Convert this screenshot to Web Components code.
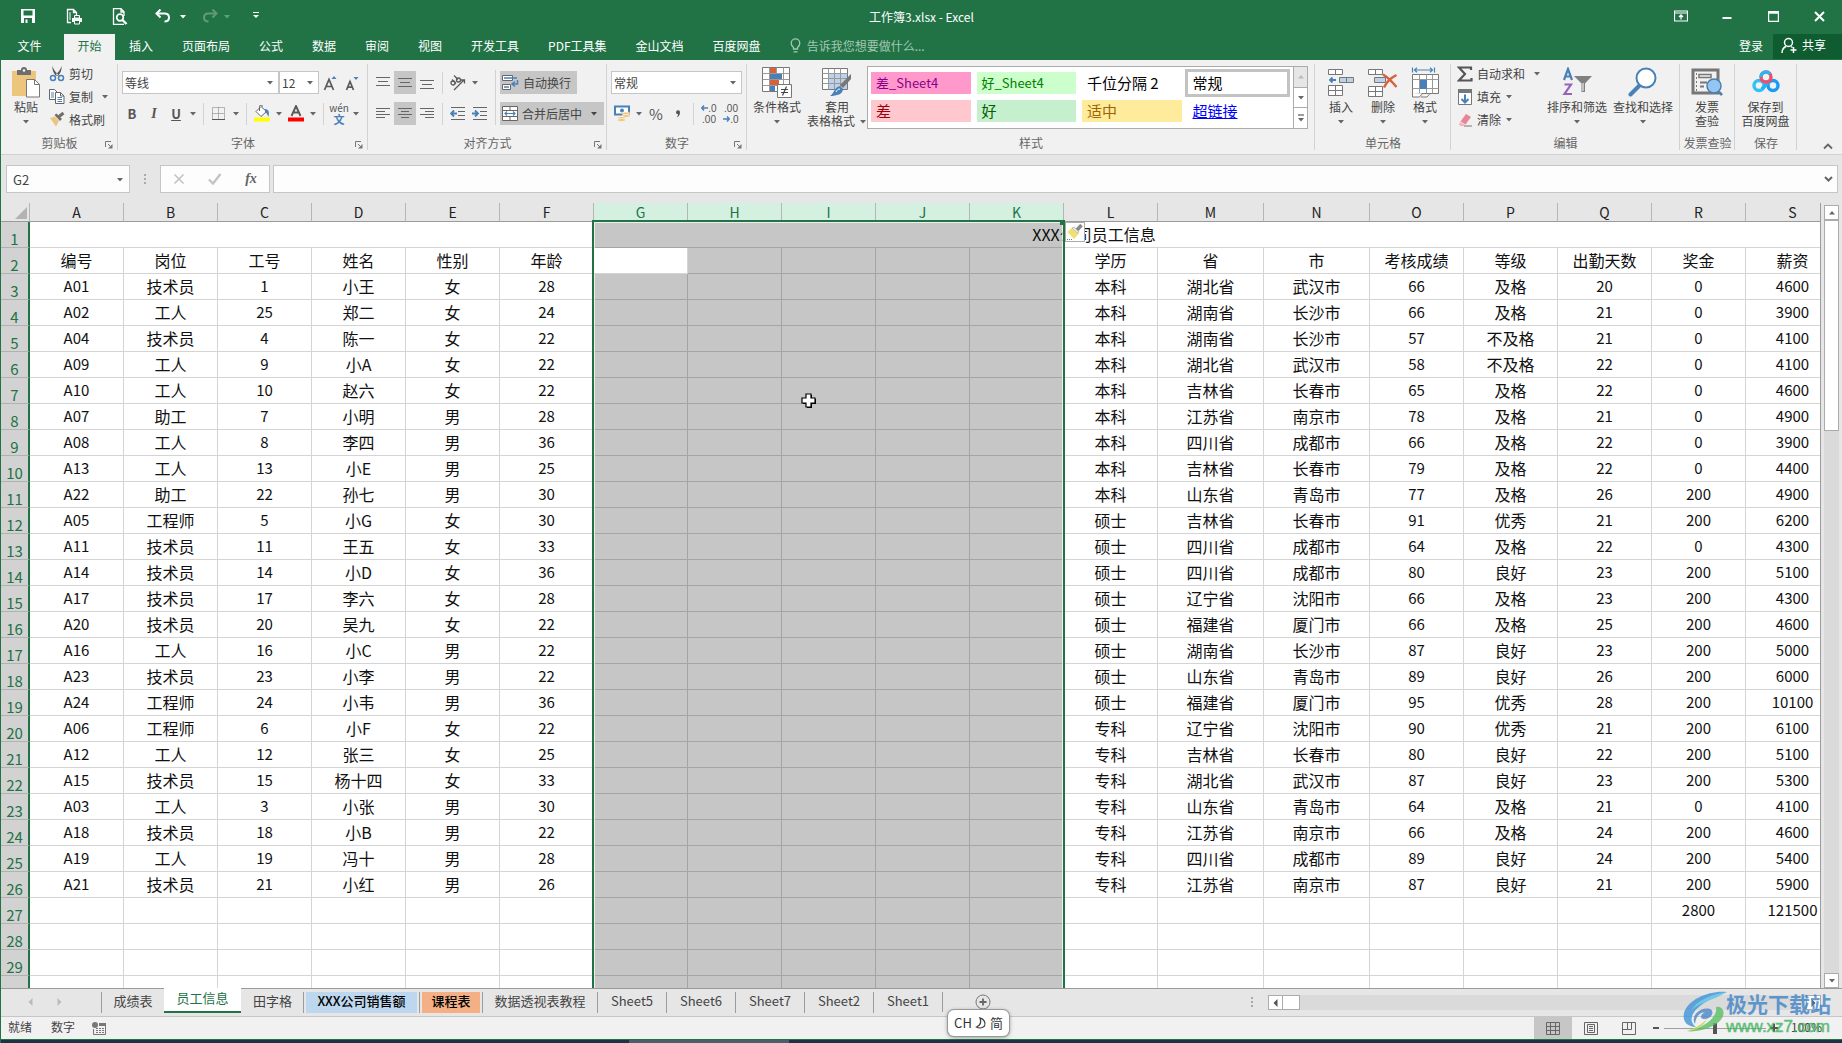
<!DOCTYPE html>
<html lang="zh-CN">
<head>
<meta charset="utf-8">
<title>工作簿3.xlsx - Excel</title>
<style>
html,body{margin:0;height:100%}
body{font:12px/16px "Noto Sans CJK SC",sans-serif;color:#444;background:#e6e6e6;overflow:hidden}
</style>
</head>
<body>
<xl-app></xl-app>
<script>
const BASE = `*{box-sizing:border-box}
button,input,select{font:inherit;color:inherit;margin:0;padding:0;border:0;background:none;border-radius:0;outline:0}
button{display:flex;align-items:center;justify-content:center;flex:none}`;

class XlElement extends HTMLElement {
  connectedCallback() {
    if (this.shadowRoot) return;
    const t = document.createElement('template');
    t.innerHTML = `<style>${BASE}</style>` + this.view();
    this.attachShadow({mode: 'open'}).append(t.content.cloneNode(true));
  }
}
const define = (name, view) => customElements.define(name, class extends XlElement {
  view() { return view(this); }
});

/* name: [width, height, drawing] */
const B = '#4a80b8';
const lines = (list, c = '#666') => `<path d="${list.map(([x, y, w]) => `M${x} ${y}.5h${w}`).join('')}" stroke="${c}" fill="none"/>`;
const ICONS = {
  caret: [8, 5, `<path d="M1 1h6l-3 3.500z" fill="currentColor"/>`],
  save: [16, 16, `<path d="M1 1h14v14H1z" fill="#fff"/><path d="M3.500 2.500h9v5h-9z" fill="#217346"/><path d="M4 10h8v5H4z" fill="#217346"/><path d="M5.500 11.500h2V15h-2z" fill="#fff"/>`],
  print: [17, 17, `<path d="M5 14.500H1.500v-13h6l3 3V7M7.500 1.500v3h3" fill="none" stroke="#fff" stroke-width="1.300"/><path d="M4 4v8" stroke="#fff"/><path d="M6 10h10v4H6z" fill="#fff"/><path d="M8.500 7.500h5V10h-5zM8.500 12.500h5v3.500h-5z" fill="#217346" stroke="#fff"/>`],
  preview: [16, 17, `<path d="M12 16.300H1.500V.7H9l3 3V8M9 .7V4h3" fill="none" stroke="#fff" stroke-width="1.300"/><circle cx="8" cy="9.500" r="3.300" fill="none" stroke="#fff" stroke-width="1.700"/><path d="M10.500 12l4 4" stroke="#fff" stroke-width="2.400"/>`],
  undo: [16, 14, `<path d="M2 4.500h7.500c3 0 4.500 1.800 4.500 4s-1.500 4-4.500 4" fill="none" stroke="#fff" stroke-width="2"/><path d="M5.500.5l-4 4 4 4" fill="none" stroke="#fff" stroke-width="2"/>`],
  redo: [16, 14, `<g opacity=".28"><path d="M14 4.500H6.500c-3 0-4.500 1.800-4.500 4s1.500 4 4.500 4" fill="none" stroke="#fff" stroke-width="2"/><path d="M10.500.5l4 4-4 4" fill="none" stroke="#fff" stroke-width="2"/></g>`],
  custom: [8, 8, `<path d="M1 .5h6" stroke="#fff"/><path d="M1 3h6L4 6z" fill="#fff"/>`],
  ribbonOpt: [14, 12, `<path d="M.5 1h13v10H.5zM.5 3h13" fill="none" stroke="#fff" stroke-width="1.200"/><path d="M7 9.500V5.500M5 7l2-2 2 2" fill="none" stroke="#fff" stroke-width="1.300"/>`],
  min: [10, 10, `<path d="M.5 7h9" stroke="#fff" stroke-width="2"/>`],
  max: [11, 11, `<path d="M.6.6h9.800v9.800H.6z" fill="none" stroke="#fff" stroke-width="1.200"/><path d="M0 1.500h11" stroke="#fff" stroke-width="2.500"/>`],
  close: [11, 11, `<path d="M1 1l9 9M10 1l-9 9" stroke="#fff" stroke-width="2"/>`],
  bulb: [11, 15, `<path d="M3.500 11V9.500C2 8.300 1.200 7 1.200 5.200a4.300 4.300 0 0 1 8.600 0C9.800 7 9 8.300 7.500 9.500V11zM3.500 13.800h4" fill="none" stroke="#a3c7b2" stroke-width="1.300"/>`],
  person: [17, 17, `<circle cx="7.500" cy="5.500" r="4" fill="none" stroke="#fff" stroke-width="1.500"/><path d="M1 16c0-3.500 1.500-5.500 4-6.500M10 9.500l1.500 1M12.500 10v6M9.500 13h6" fill="none" stroke="#fff" stroke-width="1.500"/>`],
  paste: [30, 31, `<path d="M1 4h24v25H1z" fill="#edc67d"/><path d="M6 3h4a3 3 0 0 1 6 0h4v5H6z" fill="#6e6e6e"/><circle cx="13" cy="3.500" r="1.200" fill="#fff"/><path d="M15.500 12.500h8l5 5v12.500h-13z" fill="#fff" stroke="#777"/><path d="M23.500 12.500v5h5" fill="none" stroke="#777"/>`],
  cut: [16, 16, `<path d="M3.500 0c1 3.500 3 6 5.500 8.500L7 10C4.500 7 3 4 3.500 0zM12.500 0c-1 3.500-3 6-5.500 8.500L9 10c2.500-3 4-6 3.500-10z" fill="#5a5a5a"/><circle cx="4" cy="12" r="2.500" fill="none" stroke="${B}" stroke-width="1.500"/><circle cx="12" cy="12" r="2.500" fill="none" stroke="${B}" stroke-width="1.500"/>`],
  copy: [16, 15, `<path d="M.5.5h5l3 3v7h-8z" fill="#fff" stroke="#666"/><path d="M2 4h3M2 6h3M2 8h3" stroke="${B}"/><path d="M6.500 3.500h5l3.500 3.500v7.500H6.500z" fill="#fff" stroke="#666"/><path d="M11.500 3.500V7H15" fill="none" stroke="#666"/><path d="M8.500 8.500h4.500M8.500 10.500h4.500M8.500 12.500h4.500" stroke="${B}"/>`],
  painter: [16, 15, `<path d="M1 6l5-1.500 4 4.500L7 14.500z" fill="#edc67d"/><path d="M5.500 3l2-1.500 5.500 5.500-2 2z" fill="#6e6e6e"/><path d="M10 4.500L14.500 1" stroke="#6e6e6e" stroke-width="3"/>`],
  fontUp: [15, 16, `<path d="M1.500 15L6 4.500 10.500 15M3 11.500h6" fill="none" stroke="#5a5a5a" stroke-width="1.700"/><path d="M8.500 4L11 1l2.500 3z" fill="${B}"/>`],
  fontDown: [15, 16, `<path d="M1.500 15L5 6.500 8.500 15M2.800 12.200h4.500" fill="none" stroke="#5a5a5a" stroke-width="1.700"/><path d="M8.500 2h5L11 5z" fill="${B}"/>`],
  border: [14, 14, `<path d="M.5.500h12v12H.5zM6.500.500v12M.5 6.500h12" fill="none" stroke="#777" stroke-dasharray="1 1"/><path d="M0 12.500h13" stroke="#555"/>`],
  fill: [18, 17, `<path d="M3 6.500L8 1.500l5.500 5L8 11.500z" fill="#fff" stroke="#666"/><path d="M6.500 6V1.500a1.500 1.500 0 0 1 3 0" fill="none" stroke="#666"/><path d="M12 4c4 .5 4.500 3 3.500 8-1-2-1.500-4-3.500-5z" fill="${B}"/><path d="M1 12.500h16v4H1z" fill="#ff0"/>`],
  fontColor: [18, 17, `<path d="M4.500 11L9 1l4.500 10M6 7.500h6" fill="none" stroke="#5a5a5a" stroke-width="1.900"/><path d="M1 12.500h16v4H1z" fill="#f00"/>`],
  top: [16, 12, lines([[1, 0, 14], [3, 4, 10], [1, 8, 14]])],
  mid: [16, 12, lines([[1, 1, 14], [3, 5, 10], [1, 9, 14]])],
  bot: [16, 12, lines([[1, 3, 14], [3, 7, 10], [1, 11, 14]])],
  left: [16, 12, lines([[1, 0, 14], [1, 3, 9], [1, 6, 14], [1, 9, 9]])],
  center: [16, 12, lines([[1, 0, 14], [4, 3, 8], [1, 6, 14], [4, 9, 8]])],
  right: [16, 12, lines([[1, 0, 14], [6, 3, 9], [1, 6, 14], [6, 9, 9]])],
  orient: [18, 16, `<g fill="none" stroke="#5a5a5a" stroke-width="1.300"><circle cx="4" cy="8" r="2"/><path d="M3 4.500l4 4"/><circle cx="9.500" cy="5" r="2"/><path d="M5 .5l4 4"/><path d="M5 15L15 5M12 5h3.500v3.500"/></g>`],
  outdent: [16, 13, lines([[1, 0, 14], [8, 4, 7], [8, 8, 7], [1, 12, 14]]) + `<path d="M1 6.500h6M4 3.500l-3 3 3 3" fill="none" stroke="${B}" stroke-width="1.800"/>`],
  indent: [16, 13, lines([[1, 0, 14], [8, 4, 7], [8, 8, 7], [1, 12, 14]]) + `<path d="M0 6.500h6M3 3.500l3 3-3 3" fill="none" stroke="${B}" stroke-width="1.800"/>`],
  wrap: [17, 16, `<path d="M.5.500h10v5H.5zM.5 9.500h8v5h-8z" fill="#fff" stroke="#666"/><path d="M2 3h13M2 12h5" stroke="${B}" stroke-width="1.300"/><path d="M15.500 5v4h-5M13 6.500L10 9l3 2.500" fill="none" stroke="${B}" stroke-width="1.500"/>`],
  merge: [16, 15, `<path d="M.5.500h15v14H.5zM.5 4.500h15M.5 10.500h15M8 .5v4M8 10.500v4" fill="#fff" stroke="#666"/><path d="M2.500 7.500h11M5 5.500l-2 2 2 2M11 5.500l2 2-2 2" fill="none" stroke="${B}" stroke-width="1.200"/>`],
  money: [17, 17, `<path d="M1 1.500h14v8H1z" fill="#fff" stroke="${B}" stroke-width="2"/><circle cx="8" cy="5.500" r="2" fill="${B}"/><g fill="#edc67d" stroke="#fff" stroke-width=".6"><ellipse cx="12" cy="8.500" rx="4" ry="1.500"/><ellipse cx="12" cy="11" rx="4" ry="1.500"/><ellipse cx="7.500" cy="13" rx="4" ry="1.500"/><ellipse cx="7.500" cy="15" rx="4" ry="1.500"/></g>`],
  comma: [6, 8, `<path d="M1 2.200a2 2 0 1 1 4 .3C5 5 3.500 7 1.500 7.500 2.500 6.500 3 5.500 3 4.300A2 2 0 0 1 1 2.200z" fill="#555"/>`],
  arrL: [7, 6, `<path d="M.5 3H7M3 .5L.7 3 3 5.500" fill="none" stroke="${B}" stroke-width="1.500"/>`],
  arrR: [7, 6, `<path d="M0 3h6.500M4 .5L6.300 3 4 5.500" fill="none" stroke="${B}" stroke-width="1.500"/>`],
  cond: [30, 31, `<path d="M.5.500h27v24H.5z" fill="#fff" stroke="#777"/><path d="M8 1h7v5H8zM8 13h9v5H8z" fill="#d9603b"/><path d="M8 7h12v5H8zM8 19h5v5H8z" fill="${B}"/><path d="M.5 6.500h27M.5 12.500h27M.5 18.500h27M7.500.500v24M14.500.500v6M21.500.500v24" fill="none" stroke="#999"/><path d="M15.500 17.500h14v13h-14z" fill="#fff" stroke="#777"/><path d="M19 22.500h7M19 25.500h7M24.500 19.500l-4 9" stroke="#444" stroke-width="1.200"/>`],
  tableFmt: [30, 31, `<path d="M.5 1.500h25v21H.5z" fill="#fff" stroke="#777"/><path d="M7 7h18v15H7z" fill="#bdd1e8"/><path d="M.5 6.500h25M.5 11.500h25M.5 16.500h25M6.500 1.500v21M12.500 1.500v21M18.500 1.500v21" stroke="#999" fill="none"/><path d="M29 7v5l-8 9-3-3z" fill="#777"/><path d="M18 19l3 3c0 5-6 7-13 7 4-2 4-9 10-10z" fill="${B}"/><path d="M14 25c1-2 2-3 4-3" stroke="#fff" fill="none"/>`],
  insert: [28, 31, `<path d="M1.500 2.500h14v5h-14zM8.500 2.500v5M1.500 18.500h14v10h-14zM8.500 18.500v10M1.500 23.500h14" fill="#fff" stroke="#777"/><path d="M12.500 10.500h14v5h-14zM19.500 10.500v5" fill="#bdd1e8" stroke="#777"/><path d="M3 13h6M5.500 10.500L3 13l2.500 2.500" fill="none" stroke="${B}" stroke-width="1.800"/>`],
  remove: [30, 31, `<path d="M.5 2.500h14v5H.5zM7.500 2.500v5M.5 19.500h14v10H.5zM7.500 19.500v10M.5 24.500h14" fill="#fff" stroke="#777"/><path d="M6.500 10.500h11v5h-11z" fill="#bdd1e8" stroke="#777"/><path d="M15 7.500c5 3 9 7 13.500 12.500M28.500 8c-6 3-10 7-12.500 12.500" fill="none" stroke="#d9603b" stroke-width="2.400"/>`],
  format: [29, 31, `<path d="M1.500.5v5M23.500.5v5M3 3h19M6 .8L3.500 3 6 5.200M19 .8L21.500 3 19 5.200" fill="none" stroke="${B}" stroke-width="1.200"/><path d="M1.500 7.500h26v19h-26z" fill="#fff" stroke="#777"/><path d="M1.500 12.500h26M1.500 21.500h26M8.500 7.500v19M15.500 7.500v19M21.500 7.500v19" stroke="#999" fill="none"/><path d="M9 13h7v9H9z" fill="${B}"/><path d="M1.500 26v4h7l3-3.500M10 30h6l3-3.500" stroke="#777" fill="#fff"/>`],
  sum: [16, 16, `<path d="M14 4V1.500H2L8 8l-6 6.500h12.500V12" fill="none" stroke="#555" stroke-width="2.200"/>`],
  down: [14, 16, `<path d="M.5.500h13v15H.5z" fill="#fff" stroke="#777"/><path d="M0 0h14v4H0z" fill="#777"/><path d="M7 5.500v8M3.500 10L7 13.500 10.500 10" fill="none" stroke="${B}" stroke-width="2"/>`],
  erase: [15, 14, `<path d="M8 1l5 3-5.500 7.500-5-3z" fill="#e88597"/><path d="M2 9l5 3-1 1H2.500L1 11.500z" fill="#f2b5bf"/><path d="M6 13h8" stroke="#777"/>`],
  sort: [30, 30, `<path d="M2 13L6 2l4 11M3.500 9.500h5.500" fill="none" stroke="${B}" stroke-width="2.200"/><path d="M2.500 17.500H9L2.500 27H10" fill="none" stroke="#9563b8" stroke-width="2.200"/><path d="M12 9h18l-7 7.500V25h-3.500v-8.500z" fill="#808080"/><path d="M21 16v8" stroke="#fff"/>`],
  find: [30, 30, `<path d="M2.500 27.500l9-9" stroke="${B}" stroke-width="4" stroke-linecap="round"/><circle cx="18" cy="11" r="9.500" fill="#fff" stroke="${B}" stroke-width="2"/>`],
  invoice: [32, 28, `<path d="M2 2h25v23H2z" fill="none" stroke="#777" stroke-width="3"/><path d="M8 6.500h12v3H8z" fill="none" stroke="#777" stroke-width="1.500"/><path d="M5.500 5v18" stroke="#777" stroke-dasharray="2 2"/><path d="M9 14.500h7M9 18.500h4" stroke="#777" stroke-width="2"/><circle cx="23" cy="18" r="7" fill="#94c6f5" stroke="#4a80a8" stroke-width="1.500"/><path d="M28 24l3 3" stroke="#4a80a8" stroke-width="2.500"/>`],
  baidu: [28, 28, `<circle cx="7" cy="17.500" r="5" fill="none" stroke="#2fc3f2" stroke-width="3.400"/><circle cx="21" cy="17.500" r="5" fill="none" stroke="#1b9bf5" stroke-width="3.400"/><path d="M10 21l7-7.500" stroke="#23b2f5" stroke-width="3.400"/><circle cx="14" cy="9" r="5" fill="none" stroke="#f04e6b" stroke-width="3.400"/><path d="M9 9a5 5 0 0 1 9-3" fill="none" stroke="#2bb5f0" stroke-width="3.400"/>`],
  launcher: [8, 8, `<path d="M.5 6V.5H6M3 3l3 3" fill="none" stroke="#777"/><path d="M7.500 3v4.500H3z" fill="#777"/>`],
  up: [8, 5, `<path d="M1 4.500h6L4 1z" fill="currentColor"/>`],
  lft: [5, 8, `<path d="M4.500 0v8L.5 4z" fill="currentColor"/>`],
  rgt: [5, 8, `<path d="M.5 0v8l4-4z" fill="currentColor"/>`],
  more: [8, 8, `<path d="M1 1h6" stroke="#666" stroke-width="1.300"/><path d="M1 4h6L4 7.500z" fill="#666"/>`],
  collapse: [10, 7, `<path d="M1 5.500l4-4 4 4" fill="none" stroke="#666" stroke-width="1.800"/>`],
  chev: [9, 6, `<path d="M1 1l3.500 3.500L8 1" fill="none" stroke="#666" stroke-width="2"/>`],
  x: [12, 12, `<path d="M1.500 1.500l9 9M10.500 1.500l-9 9" stroke="#c3c3c3" stroke-width="1.600"/>`],
  tick: [14, 12, `<path d="M1 6.500l4 4L12.500 1" fill="none" stroke="#c3c3c3" stroke-width="2.400"/>`],
  plus: [16, 16, `<circle cx="8" cy="8" r="7" fill="none" stroke="#777"/><path d="M8 4.500v7M4.500 8h7" stroke="#666" stroke-width="1.800"/>`],
  macro: [14, 13, `<circle cx="3" cy="3" r="3" fill="#777"/><path d="M7 1.500h6.500v11h-12V7" fill="none" stroke="#777"/><path d="M7 1h7v3H7z" fill="#777"/><path d="M4 6.500h8M4 8.500h8M4 10.500h8" stroke="#777" stroke-dasharray="2 1"/>`],
  vNormal: [14, 13, `<path d="M.5.500h13v12H.5zM.5 4.500h13M.5 8.500h13M4.500.500v12M9.500.500v12" fill="none" stroke="#666"/>`],
  vPage: [14, 13, `<path d="M.5.500h13v12H.5zM3.500 2.500h7v8h-7zM5 4.500h4M5 6.500h4M5 8.500h4" fill="none" stroke="#666"/>`],
  vBreak: [14, 13, `<path d="M.5.500h13v12H.5zM5.500.500v7M.5 7.500h9v-7" fill="none" stroke="#666"/>`],
  corner: [12, 12, `<path d="M12 0v12H0z" fill="#b3b3b3"/>`],
  pasteOpt: [18, 17, `<path d="M1.500 8l4-4 7 6-4.500 5z" fill="#f1e070"/><path d="M6 4l2-1 5 4.500-1 2z" fill="#eee" stroke="#999" stroke-width=".6"/><path d="M11 6l4.500-5" stroke="#888" stroke-width="3.500"/><path d="M1 15.500h6" stroke="#777" stroke-dasharray="1 1"/>`],
  cursor: [16, 16, `<path d="M6 2h5v4h4v5h-4v4H6v-4H2V6h4z" fill="#000"/><path d="M5 1h5v4h4v5h-4v4H5v-4H1V5h4z" fill="#fff" stroke="#000" stroke-width="1.200"/>`],
  moon: [12, 12, `<path d="M5 1c4 1 6 4.500 4.500 8C7.500 11 4 11.500 1.500 10 5 8.500 6.500 5 5 1z" fill="none" stroke="#444" stroke-width="1.300"/>`],
  swirl: [46, 42, `<path d="M45 1C28-1 6 8 2 22c-2 9 4 14 12 14C5 30 7 15 45 1z" fill="#3e94d8"/><path d="M45 1C30 3 14 10 9 20 15 12 30 10 45 1z" fill="#58c4ea"/><path d="M5 40c10 2 32-4 36-15 2-6-2-10-7-9 2 8-8 20-29 24z" fill="#5bbf66"/><path d="M5 40c8-3 16-7 20-13-2 7-8 12-20 13z" fill="#c5d94a"/><path d="M13 33c-5-7 5-18 15-15 5 2 2 10-6 10-5 0-3-6 1-6-2-2-9 1-10 11z" fill="#4b86c8"/>`]
};
define('xl-icon', el => {
  const [w, h, d] = ICONS[el.getAttribute('name')];
  return `<style>:host{display:inline-flex;flex:none}svg{display:block}</style><svg width="${w}" height="${h}" viewBox="0 0 ${w} ${h}" aria-hidden="true">${d}</svg>`;
});
const ic = n => `<xl-icon name="${n}"></xl-icon>`;

define('xl-titlebar', () => `<style>
:host{display:grid;grid-template-columns:1fr auto 1fr;align-items:center;height:34px;background:#217346;color:#fff}
.q{display:flex;align-items:center;padding-left:4px}
.q,.w{height:34px;padding-bottom:2px}
.q button{width:46px;height:32px}
.q .u{width:40px}.q .c{width:10px}.q .c{margin-left:-5px}.q .r{width:34px;margin-left:5px}.q .m{width:40px;margin-left:4px}
.dim{opacity:.3}
h1{margin:0;font:inherit;font-size:12px}
.w{display:flex;justify-content:flex-end}.w button{width:46px;height:32px}
</style>
<div class="q"><button aria-label="保存">${ic('save')}</button><button aria-label="快速打印">${ic('print')}</button><button aria-label="打印预览">${ic('preview')}</button>
<button class="u" aria-label="撤消">${ic('undo')}</button><button class="c" aria-label="撤消列表">${ic('caret')}</button>
<button class="r" aria-label="恢复">${ic('redo')}</button><button class="c dim" aria-label="恢复列表">${ic('caret')}</button>
<button class="m" aria-label="自定义">${ic('custom')}</button></div>
<h1>工作簿3.xlsx - Excel</h1>
<div class="w"><button aria-label="功能区选项">${ic('ribbonOpt')}</button><button aria-label="最小化">${ic('min')}</button><button aria-label="最大化">${ic('max')}</button><button aria-label="关闭">${ic('close')}</button></div>`);

define('xl-menu', () => `<style>
:host{display:flex;height:26px;background:#217346;color:#fff}
button{padding:0 14px 3px;margin-right:1px}
.file{width:63px;padding:0 6px 3px 0;margin:0}
.on{background:#f1f1f1;color:#217346;padding:0 0 3px;width:51px;margin:0}
.tell{color:#a3c7b2;gap:6px;padding:0 14px 3px}
.s{flex:1}
.login{padding:0 10px 3px;margin:0}
.share{background:#0e5c2f;width:69px;height:25px;padding:0 8px 3px 0;margin:0;gap:4px}
</style>
<button class="file">文件</button><button class="on">开始</button>
${['插入', '页面布局', '公式', '数据', '审阅', '视图', '开发工具', 'PDF工具集', '金山文档', '百度网盘'].map(t => `<button>${t}</button>`).join('')}
<button class="tell">${ic('bulb')}<span>告诉我您想要做什么...</span></button><span class="s"></span>
<button class="login">登录</button><button class="share">${ic('person')}<span>共享</span></button>`);

define('xl-group', el => `<style>
:host{display:flex;flex-direction:column;flex:none;position:relative;height:94px;background:linear-gradient(#d2d2d2,#d2d2d2) right 4px/1px 86px no-repeat}
.b{display:flex;height:72px;padding-top:2px}
.l{display:flex;align-items:center;justify-content:center;height:21px;color:#666;white-space:nowrap}
.l button{position:absolute;right:4px;bottom:4px;width:10px;height:10px}
</style><div class="b"><slot></slot></div><div class="l"><span>${el.getAttribute('label')}</span>${el.hasAttribute('launcher') ? `<button aria-label="更多设置">${ic('launcher')}</button>` : ''}</div>`);

define('xl-big', el => {
  const [a, b] = el.getAttribute('label').split('|');
  const caret = el.hasAttribute('caret') ? ic('caret') : '';
  return `<style>:host{display:block;flex:none}
button{width:100%;flex-direction:column;justify-content:flex-start;line-height:14px;padding-top:4px;white-space:nowrap;color:#444}
.i{display:flex;height:32px;align-items:center;margin-bottom:2px}
.t{display:flex;height:14px;align-items:center;gap:4px}xl-icon[name=caret]{color:#666}
</style><button><span class="i">${ic(el.getAttribute('icon'))}</span><span class="t">${a}</span><span class="t">${b || ''}${caret}</span></button>`;
});

define('xl-small', el => `<style>:host{display:block}
button{height:23px;justify-content:flex-start;white-space:nowrap;color:#444}
.i{display:flex;width:20px;justify-content:center;margin-right:2px}xl-icon[name=caret]{margin-left:var(--caret-gap,4px);color:#666}
</style><button><span class="i">${ic(el.getAttribute('icon'))}</span>${el.getAttribute('label')}${el.hasAttribute('caret') ? ic('caret') : ''}</button>`);

define('xl-combo', el => `<style>
:host{display:flex;position:relative;height:23px}
select{appearance:none;width:100%;height:23px;border:1px solid #c6c6c6;background:#fff;padding:0 18px 0 2px;color:#444;font-size:12px}
xl-icon{position:absolute;right:5px;top:9px;pointer-events:none;color:#666}
</style><select aria-label="${el.getAttribute('label')}"><option>${el.getAttribute('value')}</option></select>${ic('caret')}`);

define('xl-gallery', () => `<style>
:host{display:flex;flex:1;height:63px;border:1px solid #ababab;background:#fff;margin-top:4px}
.g{flex:1;display:grid;grid-template-columns:repeat(4,1fr);grid-auto-rows:22px;gap:6px;padding:5px 6px 5px 3px}
.g button{justify-content:flex-start;padding:0 0 1px 5px;font-size:15px;white-space:nowrap}
.g .s{font-size:13px}
.sel{outline:3px solid #c3c3c3;outline-offset:0}
.n{width:14px;display:flex;flex-direction:column;border-left:1px solid #ababab}
.n button{flex:1;width:13px;color:#666}.n button+button{border-top:1px solid #ababab}.n .d{background:#e6e6e6;color:#bbb}
</style><div class="g">
<button class="s" style="background:#ff99cc;color:#8b008b">差_Sheet4</button><button class="s" style="background:#ccffcc;color:#008000">好_Sheet4</button><button style="color:#000">千位分隔 2</button><button class="sel" style="color:#000">常规</button>
<button style="background:#ffc7ce;color:#9c0006">差</button><button style="background:#c6efce;color:#006100">好</button><button style="background:#ffeb9c;color:#9c6500">适中</button><button style="color:#0000ff;text-decoration:underline">超链接</button>
</div><div class="n"><button class="d" aria-label="上一行">${ic('up')}</button><button aria-label="下一行">${ic('caret')}</button><button aria-label="其他">${ic('more')}</button></div>`);

define('xl-ribbon', () => `<style>
:host{display:flex;height:95px;background:#f1f1f1;border-bottom:1px solid #d2d2d2;white-space:nowrap}
.rows{display:flex;flex-direction:column;gap:8px;padding-top:9px}
.row{display:flex;height:23px;align-items:center}
.row>button{width:22px;height:23px;color:#555}
.row>.c{width:12px;color:#666}
.row>.on{background:#c6c6c6}
.sep{width:1px;height:22px;background:#d2d2d2;margin:0 4px}
.tall{width:1px;height:55px;background:#d2d2d2;margin:8px 4px 0}
.row>.txt{width:auto;background:#c6c6c6;padding:0 6px 0 2px;gap:4px;color:#444}
.clip{width:117px}.font{width:250px}.align{width:239px}.num{width:140px}.style{flex:1}.cell{width:136px}.edit{width:229px}.inv{width:55px}.bd{width:62px}
.b{font-weight:700;font-size:13px}.i{font:italic 700 14px "Liberation Serif",serif}
.row>.dec{flex-direction:column;font:10px/11px "Liberation Sans",sans-serif}.dec span{display:flex;align-items:center}
.wen{flex-direction:column;font-size:10px;line-height:10px}.wen b{color:${B};font-size:11px;line-height:12px}
.pct{font-size:15px}
.end{flex:none;width:45px;display:flex;justify-content:flex-end;align-items:flex-end;padding:0 9px 4px 0}
</style>
<xl-group class="clip" label="剪贴板" launcher style="--caret-gap:8px">
  <xl-big icon="paste" label="粘贴" caret style="width:38px;margin-left:6px"></xl-big>
  <div style="padding-left:2px"><xl-small icon="cut" label="剪切"></xl-small><xl-small icon="copy" label="复制" caret></xl-small><xl-small icon="painter" label="格式刷"></xl-small></div>
</xl-group>
<xl-group class="font" label="字体" launcher><div class="rows" style="padding-left:4px">
  <div class="row"><xl-combo label="字体" value="等线" style="width:157px"></xl-combo><xl-combo label="字号" value="12" style="width:40px"></xl-combo><button aria-label="增大字号">${ic('fontUp')}</button><button aria-label="减小字号">${ic('fontDown')}</button></div>
  <div class="row" style="margin-left:-1px"><button class="b">B</button><button class="i">I</button><button class="b"><u>U</u></button><button class="c" aria-label="下划线样式">${ic('caret')}</button><span class="sep"></span>
  <button aria-label="边框">${ic('border')}</button><button class="c" aria-label="边框列表">${ic('caret')}</button><span class="sep"></span>
  <button aria-label="填充颜色">${ic('fill')}</button><button class="c" aria-label="填充列表">${ic('caret')}</button><button aria-label="字体颜色">${ic('fontColor')}</button><button class="c" aria-label="颜色列表">${ic('caret')}</button><span class="sep"></span>
  <button class="wen"><span>wén</span><b>文</b></button><button class="c" aria-label="拼音列表">${ic('caret')}</button></div>
</div></xl-group>
<xl-group class="align" label="对齐方式" launcher><div class="rows" style="width:123px;padding-left:4px">
  <div class="row"><button aria-label="顶端对齐">${ic('top')}</button><button class="on" aria-label="垂直居中">${ic('mid')}</button><button aria-label="底端对齐">${ic('bot')}</button><span class="sep"></span><button aria-label="方向">${ic('orient')}</button><button class="c" aria-label="方向列表">${ic('caret')}</button></div>
  <div class="row"><button aria-label="左对齐">${ic('left')}</button><button class="on" aria-label="居中">${ic('center')}</button><button aria-label="右对齐">${ic('right')}</button><span class="sep"></span><button aria-label="减少缩进">${ic('outdent')}</button><button aria-label="增加缩进">${ic('indent')}</button></div></div>
  <span class="tall"></span>
  <div class="rows"><div class="row"><button class="txt">${ic('wrap')}自动换行</button></div><div class="row"><button class="txt">${ic('merge')}合并后居中<span></span>${ic('caret')}</button></div></div>
</xl-group>
<xl-group class="num" label="数字" launcher><div class="rows" style="padding-left:4px">
  <div class="row"><xl-combo label="数字格式" value="常规" style="width:131px"></xl-combo></div>
  <div class="row"><button aria-label="会计格式">${ic('money')}</button><button class="c" aria-label="会计列表">${ic('caret')}</button><button class="pct">%</button><button aria-label="千位分隔">${ic('comma')}</button><span class="sep"></span>
  <button class="dec"><span>${ic('arrL')}.0</span><span>.00</span></button><button class="dec"><span>.00</span><span>${ic('arrR')}.0</span></button></div>
</div></xl-group>
<xl-group class="style" label="样式">
  <xl-big icon="cond" label="条件格式" caret style="width:60px"></xl-big><xl-big icon="tableFmt" label="套用|表格格式" caret style="width:60px"></xl-big>
  <xl-gallery style="margin-right:7px"></xl-gallery>
</xl-group>
<xl-group class="cell" label="单元格"><xl-big icon="insert" label="插入" caret style="width:42px;margin-left:5px"></xl-big><xl-big icon="remove" label="删除" caret style="width:42px"></xl-big><xl-big icon="format" label="格式" caret style="width:42px"></xl-big></xl-group>
<xl-group class="edit" label="编辑" ><div style="width:88px;padding-left:4px"><xl-small icon="sum" label="自动求和" caret style="--caret-gap:8px"></xl-small><xl-small icon="down" label="填充" caret></xl-small><xl-small icon="erase" label="清除" caret></xl-small></div>
  <xl-big icon="sort" label="排序和筛选" caret style="width:76px"></xl-big><xl-big icon="find" label="查找和选择" caret style="width:56px"></xl-big></xl-group>
<xl-group class="inv" label="发票查验"><xl-big icon="invoice" label="发票|查验" style="width:54px"></xl-big></xl-group>
<xl-group class="bd" label="保存"><xl-big icon="baidu" label="保存到|百度网盘" style="width:61px"></xl-big></xl-group>
<div class="end">${ic('collapse')}</div>`);

define('xl-formula', () => `<style>
:host{display:flex;height:48px;padding:10px 4px 10px 5px;font-size:13px}
.n,.f,.t{border:1px solid #c6c6c6;background:#fdfdfd;display:flex;align-items:center}
.n{width:124px;padding:0 5px 0 6px;color:#666}.n input{flex:1;min-width:0;height:24px;font-size:13px;color:#444}
.d{width:30px;display:flex;flex-direction:column;align-items:center;justify-content:center;gap:2px}.d i{width:2px;height:2px;background:#aaa}
.f{width:110px}.f button{flex:1;height:26px}.fx{font:italic 700 14px "Liberation Serif",serif;color:#666}
.t{flex:1;margin-left:3px;padding-right:4px}.t input{flex:1;height:26px}
</style>
<div class="n"><input aria-label="名称框" value="G2">${ic('caret')}</div>
<div class="d"><i></i><i></i><i></i></div>
<div class="f"><button aria-label="取消">${ic('x')}</button><button aria-label="输入">${ic('tick')}</button><button class="fx">fx</button></div>
<div class="t"><input aria-label="编辑栏">${ic('chev')}</div>`);

const DATA = `A01 技术员 1 小王 女 28|本科 湖北省 武汉市 66 及格 20 0 4600
A02 工人 25 郑二 女 24|本科 湖南省 长沙市 66 及格 21 0 3900
A04 技术员 4 陈一 女 22|本科 湖南省 长沙市 57 不及格 21 0 4100
A09 工人 9 小A 女 22|本科 湖北省 武汉市 58 不及格 22 0 4100
A10 工人 10 赵六 女 22|本科 吉林省 长春市 65 及格 22 0 4600
A07 助工 7 小明 男 28|本科 江苏省 南京市 78 及格 21 0 4900
A08 工人 8 李四 男 36|本科 四川省 成都市 66 及格 22 0 3900
A13 工人 13 小E 男 25|本科 吉林省 长春市 79 及格 22 0 4400
A22 助工 22 孙七 男 30|本科 山东省 青岛市 77 及格 26 200 4900
A05 工程师 5 小G 女 30|硕士 吉林省 长春市 91 优秀 21 200 6200
A11 技术员 11 王五 女 33|硕士 四川省 成都市 64 及格 22 0 4300
A14 技术员 14 小D 女 36|硕士 四川省 成都市 80 良好 23 200 5100
A17 技术员 17 李六 女 28|硕士 辽宁省 沈阳市 66 及格 23 200 4300
A20 技术员 20 吴九 女 22|硕士 福建省 厦门市 66 及格 25 200 4600
A16 工人 16 小C 男 22|硕士 湖南省 长沙市 87 良好 23 200 5000
A23 技术员 23 小李 男 22|硕士 山东省 青岛市 89 良好 26 200 6000
A24 工程师 24 小韦 男 36|硕士 福建省 厦门市 95 优秀 28 200 10100
A06 工程师 6 小F 女 22|专科 辽宁省 沈阳市 90 优秀 21 200 6100
A12 工人 12 张三 女 25|专科 吉林省 长春市 80 良好 22 200 5100
A15 技术员 15 杨十四 女 33|专科 湖北省 武汉市 87 良好 23 200 5300
A03 工人 3 小张 男 30|专科 山东省 青岛市 64 及格 21 0 4100
A18 技术员 18 小B 男 22|专科 江苏省 南京市 66 及格 24 200 4600
A19 工人 19 冯十 男 28|专科 四川省 成都市 89 良好 24 200 5400
A21 技术员 21 小红 男 26|专科 江苏省 南京市 87 良好 21 200 5900`;

define('xl-grid', () => {
  const gap = ['', '', '', '', ''];
  const rows = [['编号', '岗位', '工号', '姓名', '性别', '年龄', ...gap, '学历', '省', '市', '考核成绩', '等级', '出勤天数', '奖金', '薪资']];
  DATA.split('\n').forEach(r => { const [a, b] = r.split('|'); rows.push([...a.split(' '), ...gap, ...b.split(' ')]); });
  rows.push([...Array(17).fill(''), '2800', '121500']);
  while (rows.length < 29) rows.push(Array(19).fill(''));
  const cols = [...'ABCDEFGHIJKLMNOPQRS'];
  return `<style>
:host{display:block;position:relative;flex:1;min-width:0;overflow:hidden;background:#fff;border-right:1px solid #9b9b9b}
table{table-layout:fixed;border-collapse:separate;border-spacing:0;width:2158px;color:#111}
th,td{padding:0 0 1px;font-weight:400;text-align:center;white-space:nowrap;height:26px;border-right:1px solid #d4d4d4;border-bottom:1px solid #d4d4d4;font-size:16px;line-height:24px}
td.n{font-size:15px}
thead th{height:19px;line-height:17px;font-size:14px;background:#e6e6e6;border-right-color:#b5b5b5;border-bottom-color:#9b9b9b;color:#222;padding:1px 0 0}
thead th.on{background:#d3f0e0;color:#217346}
thead th:first-child{padding:2px 2px 0 0;text-align:right}thead th xl-icon{display:flex;justify-content:flex-end}
tbody th{background:#d2d2d2;color:#217346;border-right:2px solid #217346;border-bottom-color:#b1b1b1;font-size:15px;line-height:16px;padding:9px 0 0}
.act{position:relative;z-index:2;background:#fff;background-clip:padding-box}
.sel{position:absolute;left:591px;top:17px;width:473px;bottom:-4px;border:2px solid #217346;background:rgba(0,0,0,.224);box-shadow:inset 0 0 0 1px rgba(255,255,255,.7);pointer-events:none;z-index:1}
.sel::after{content:"";position:absolute;right:-2px;top:-2px;width:5px;height:5px;background:#217346}
.po{position:absolute;left:1064px;top:19px;width:20px;height:20px;background:#fff;border:1px solid #ababab;z-index:3}
.cur{position:absolute;left:800px;top:190px;z-index:3}
</style><table><colgroup><col style="width:29px">${cols.map(c => `<col style="width:${c === 'M' || c === 'N' ? 106 : 94}px">`).join('')}<col></colgroup>
<thead><tr><th>${ic('corner')}</th>${cols.map(c => `<th${'GHIJK'.includes(c) ? ' class="on"' : ''}>${c}</th>`).join('')}<th></th></tr></thead>
<tbody><tr><th>1</th><td colspan="20">XXX公司员工信息</td></tr>
${rows.map((r, i) => `<tr><th>${i + 2}</th>${r.map((v, j) => `<td${i === 0 && j === 6 ? ' class="act"' : /^A?\d+$/.test(v) ? ' class="n"' : ''}>${v}</td>`).join('')}<td></td></tr>`).join('')}</tbody></table>
<div class="sel"></div><button class="po" aria-label="粘贴选项">${ic('pasteOpt')}</button><span class="cur">${ic('cursor')}</span>`;
});

define('xl-vscroll', () => `<style>
:host{display:flex;flex-direction:column;width:21px;padding:2px 3px 0 3px;background:#e6e6e6}
button{width:15px;height:15px;border:1px solid #ababab;background:#fff;color:#666}
.t{flex:1;background:#dadada}.t div{height:211px;border:1px solid #ababab;background:#fff}
</style><button aria-label="向上">${ic('up')}</button><div class="t"><div></div></div><button aria-label="向下">${ic('caret')}</button>`);

define('xl-sheets', () => `<style>
:host{display:flex;height:28px;border-top:1px solid #9b9b9b;background:#e6e6e6;font-size:13px;white-space:nowrap}
.nav{width:100px;display:flex;color:#bbb;padding:6px 0 0 15px}.nav button{width:29px;height:14px}
.tab{height:21px;margin-top:3px;border-left:1px solid #9b9b9b;display:flex}
.tab button{height:21px;padding:0 0 4px;margin:0 2px}
.tab.plain button{margin:0}
.on{height:25px;background:#fff;color:#217346;border-bottom:2px solid #217346;width:77px;padding-bottom:3px;margin-top:-1px}
.add{width:81px;border-left:1px solid #9b9b9b;height:20px;margin-top:3px}
.s{flex:1}
.d{display:flex;flex-direction:column;gap:2px;padding-top:8px;margin-right:15px}.d i{width:2px;height:2px;background:#aaa}
.h{display:flex;width:553px;height:15px;margin:6px 21px 0 0;background:#dadada}
.h button{width:15px;height:15px;border:1px solid #ababab;background:#fff;color:#555}.h div{width:17px;border:1px solid #ababab;border-left:0;background:#fff;margin-right:auto}
</style>
<div class="nav"><button aria-label="上一张">${ic('lft')}</button><button aria-label="下一张">${ic('rgt')}</button></div>
<div class="tab plain"><button style="width:62px">成绩表</button></div><button class="on">员工信息</button><div class="tab plain" style="border-color:transparent"><button style="width:61px">田字格</button></div>
<div class="tab"><button style="background:#bdd7ee;color:#000;font-weight:500;width:111px">XXX公司销售额</button></div>
<div class="tab"><button style="background:#f4b084;color:#000;font-weight:500;width:58px">课程表</button></div>
<div class="tab plain"><button style="width:114px">数据透视表教程</button></div>
${['Sheet5', 'Sheet6', 'Sheet7', 'Sheet2', 'Sheet1'].map(s => `<div class="tab plain"><button style="width:68px">${s}</button></div>`).join('')}
<button class="add" aria-label="新工作表">${ic('plus')}</button><span class="s"></span>
<div class="d"><i></i><i></i><i></i></div>
<div class="h"><button aria-label="向左">${ic('lft')}</button><div></div><button aria-label="向右">${ic('rgt')}</button></div>`);

define('xl-status', () => `<style>
:host{display:flex;height:23px;border-top:1px solid #c6c6c6;background:#f1f1f1;align-items:center;padding:0 20px 0 7px}
span{margin-right:19px;padding-bottom:2px}.s{flex:1;margin:0}
.v{width:38px;height:22px}.v.on{background:#c6c6c6}
.z{width:16px;height:22px;font-size:0}.z::before{content:"";width:6px;height:2px;background:#555}.z.p{background:linear-gradient(#555,#555) center/2px 8px no-repeat}.z.p::before{width:8px}
input{appearance:none;width:102px;height:22px;background:linear-gradient(#a0a0a0,#a0a0a0) center/100% 1px no-repeat}
input::-webkit-slider-thumb{appearance:none;width:4px;height:11px;background:#555}
.pc{width:40px;justify-content:flex-end;padding-bottom:2px}
</style><span>就绪</span><span style="margin-right:16px">数字</span><button style="width:16px" aria-label="录制宏">${ic('macro')}</button><span class="s"></span>
<button class="v on" aria-label="普通">${ic('vNormal')}</button><button class="v" aria-label="页面布局">${ic('vPage')}</button><button class="v" aria-label="分页预览">${ic('vBreak')}</button>
<button class="z" aria-label="缩小"></button><input aria-label="缩放" type="range" min="0" max="100" value="50"><button class="z p" aria-label="放大"></button><button class="pc">100%</button>`);

define('xl-watermark', () => `<style>
:host{position:absolute;right:11px;bottom:6px;display:flex;opacity:.8;pointer-events:none}
div{display:flex;flex-direction:column;white-space:nowrap}
b{font-size:21px;line-height:24px;color:#3f84c8;height:26px}i{font:500 17px/20px "Liberation Sans",sans-serif;color:#3bb35c;-webkit-text-stroke:.5px #3bb35c}
xl-icon{margin-right:-2px}
</style>${ic('swirl')}<div><b>极光下载站</b><i>www.xz7.com</i></div>`);

define('xl-ime', () => `<style>
:host{position:absolute;left:947px;bottom:7px;width:61px;height:26px;border-radius:6px;background:#fff;box-shadow:0 0 0 1px #999,0 1px 4px rgba(0,0,0,.5);display:flex;align-items:center;justify-content:center;gap:3px;color:#333;font-size:13px}
span{padding-bottom:1px}
</style><span>CH</span>${ic('moon')}<span>简</span>`);

define('xl-app', () => `<style>
:host{display:flex;flex-direction:column;height:100vh;position:relative;border-left:1px solid #217346;overflow:hidden}
:host>*{flex:none}
.m{display:flex;flex:1;min-height:0}
.e{height:4px;border-top:1px solid #217346;background:linear-gradient(#4b5f6b,#4b5f6b) 628px 0/160px 100% no-repeat #1d3344}
</style>
<xl-titlebar></xl-titlebar><xl-menu></xl-menu><xl-ribbon></xl-ribbon><xl-formula></xl-formula>
<div class="m"><xl-grid></xl-grid><xl-vscroll></xl-vscroll></div>
<xl-sheets></xl-sheets><xl-status></xl-status><div class="e"></div>
<xl-watermark></xl-watermark><xl-ime></xl-ime>`);
</script>
</body>
</html>
